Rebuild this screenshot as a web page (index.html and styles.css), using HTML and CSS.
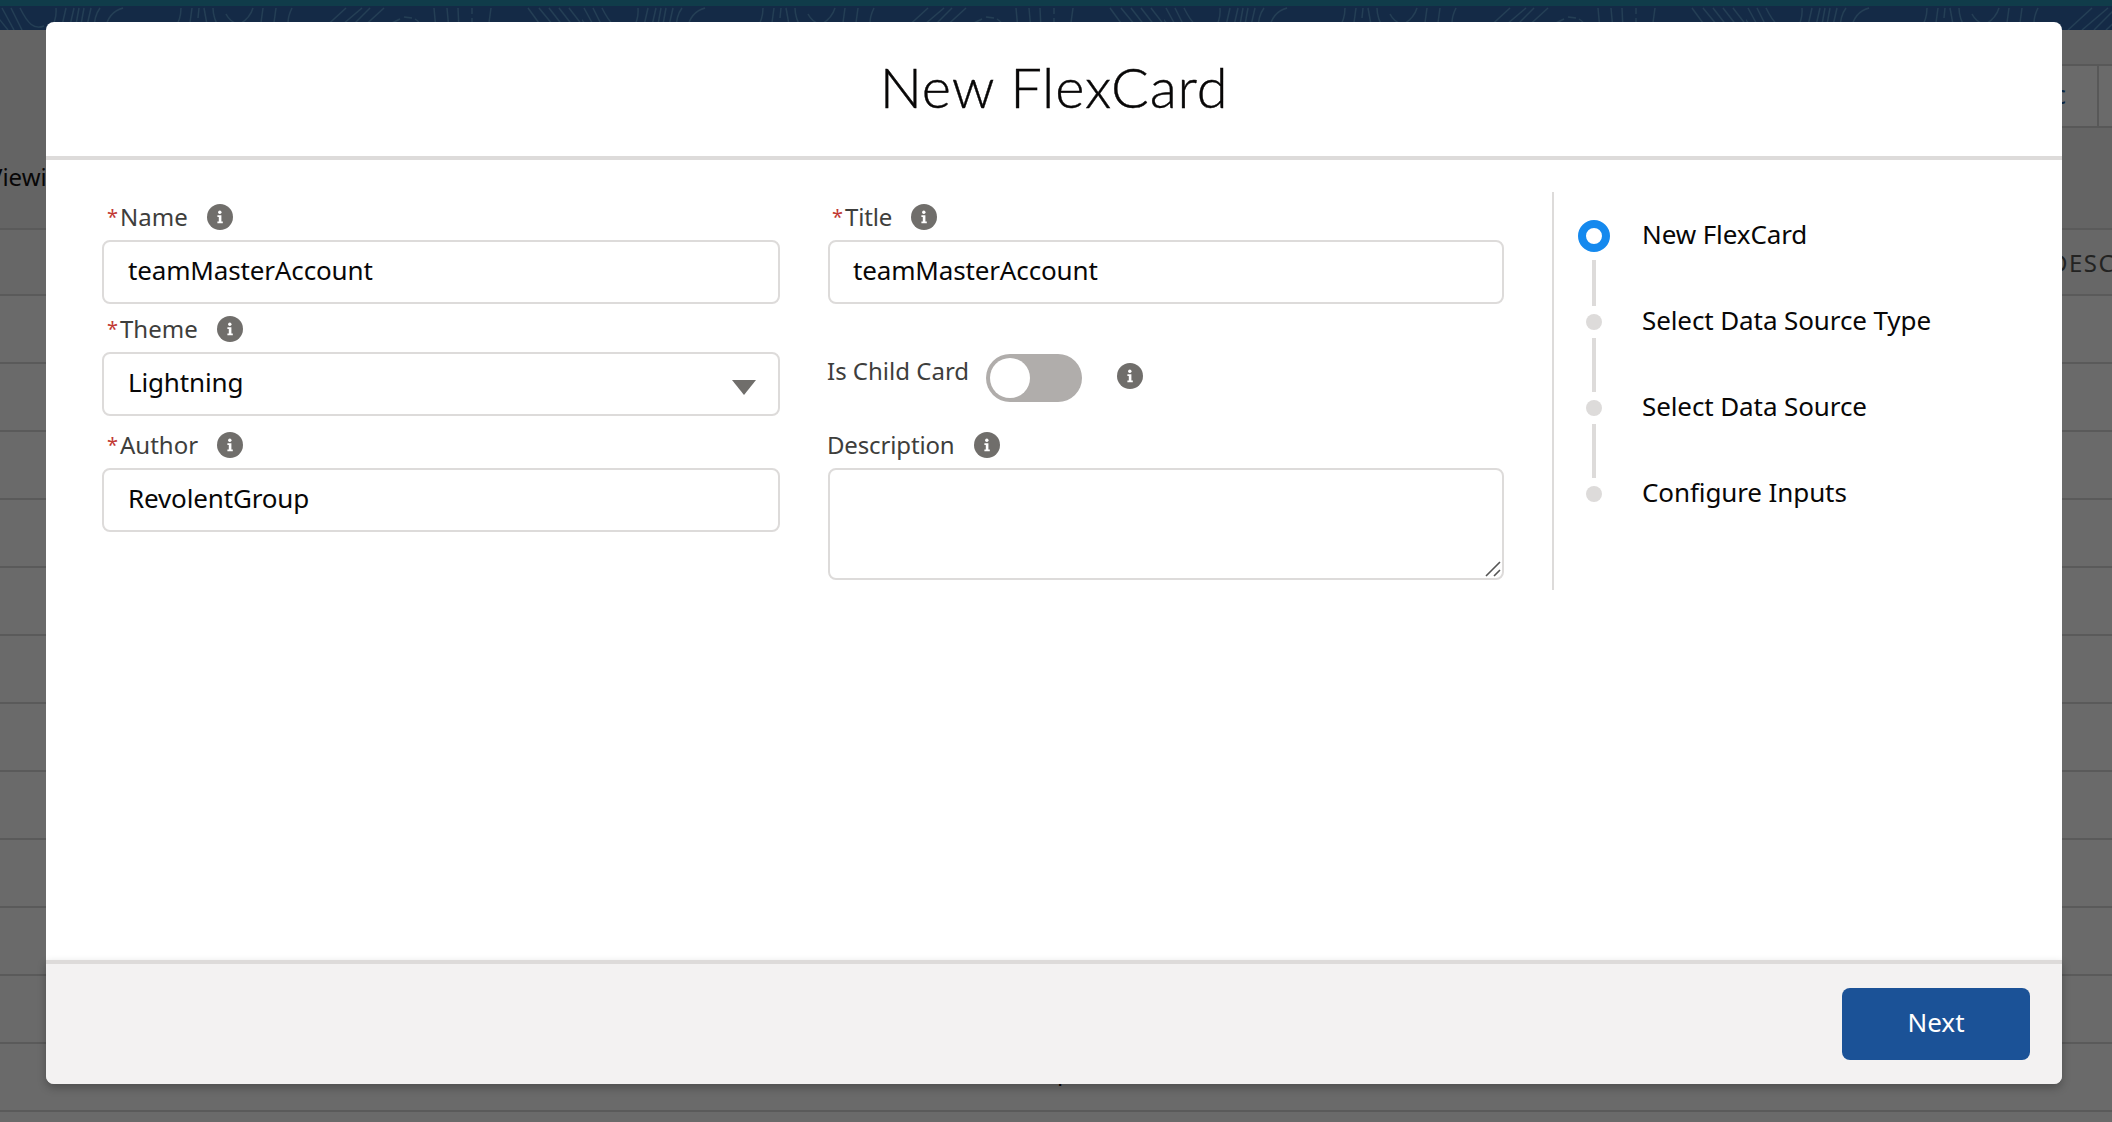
FILE: index.html
```html
<!DOCTYPE html>
<html lang="en">
<head>
<meta charset="utf-8">
<title>New FlexCard</title>
<link rel="stylesheet" href="styles.css">
</head>
<body>
<svg class="defs" aria-hidden="true">
  <symbol id="info" viewBox="0 0 26 26">
    <circle cx="13" cy="13" r="13" fill="#706e6b"/>
    <circle cx="12.8" cy="8.3" r="1.7" fill="#fff"/>
    <path d="M10.4 11.2h4v6.2h1.4v1.9h-5.4v-1.9h1.4v-4.3h-1.4z" fill="#fff"/>
  </symbol>
</svg>
<div class="page">
  <div class="topbar"></div>
  <svg class="band" width="2112" height="24">
    <defs>
      <pattern id="waves" width="582" height="24" patternUnits="userSpaceOnUse">
        <g fill="none" stroke="#243f55" stroke-width="1.4">
          <path d="M-8 4L8 24M2 2L14 24M11 2L22 24M20 2C28 18 34 24 44 20M56 2Q57 14 50 24M66 2L61 24M74 2L69 24M79 2L75 24M84 2L80 24M91 2L86 24M100 2Q94 10 94 24M123 2Q108 6 105 24M181 2Q181 14 174 24M192 2L189 24M199 2L198 12M204 2L208 24M213 2Q213 12 220 24M226 8Q230 16 238 18M253 2Q250 12 240 18M263 2L260 24M276 2L273 24M292 2Q286 14 289 24M346 2L322 24M362 2L336 24M370 2L348 24M384 2L360 24M392 17L400 13M404 11L412 12M415 13Q420 16 421 20M434 2L436 24M447 2L449 24M458 2L459 24M472 2V8M472 12V24M491 2L488 24M528 2L544 24M539 2L557 24M549 2L566 24M559 2L576 24M569 2L586 24"/>
        </g>
      </pattern>
    </defs>
    <rect width="2112" height="24" fill="#142a46"/>
    <rect width="2112" height="24" fill="url(#waves)"/>
  </svg>
  <div class="tools"><div class="tool">c</div><div class="tool"></div></div>
  <div class="viewing">Viewing</div>
  <div class="thead">DESCRIPTION</div>
  <div class="rows"></div>
  <div class="below">p</div>
</div>

<main class="modal">
  <header class="modal-header"><h1>New FlexCard</h1></header>
  <section class="modal-body">
    <form class="form">
      <div class="field">
        <div class="label"><b>*</b>Name<svg><use href="#info"/></svg></div>
        <div class="input">teamMasterAccount</div>
      </div>
      <div class="field second">
        <div class="label"><b>*</b>Title<svg><use href="#info"/></svg></div>
        <div class="input">teamMasterAccount</div>
      </div>
      <div class="field">
        <div class="label"><b>*</b>Theme<svg><use href="#info"/></svg></div>
        <div class="input select">Lightning<i class="caret"></i></div>
      </div>
      <div class="field child">
        <span>Is Child Card</span><div class="toggle"></div><svg><use href="#info"/></svg>
      </div>
      <div class="field">
        <div class="label"><b>*</b>Author<svg><use href="#info"/></svg></div>
        <div class="input">RevolentGroup</div>
      </div>
      <div class="field second">
        <div class="label plain">Description<svg><use href="#info"/></svg></div>
        <div class="input area"><svg class="grip" viewBox="0 0 18 18"><path d="M2 16L16 2M10 16L16 10"/></svg></div>
      </div>
    </form>
    <ol class="steps">
      <li class="active"><span class="text">New FlexCard</span></li>
      <li><span class="text">Select Data Source Type</span></li>
      <li><span class="text">Select Data Source</span></li>
      <li><span class="text">Configure Inputs</span></li>
    </ol>
  </section>
  <footer class="modal-footer"><button>Next</button></footer>
</main>
</body>
</html>
```
FILE: styles.css
```css
*, *::before, *::after { box-sizing: border-box; }
body {
  margin: 0;
  width: 2112px;
  height: 1122px;
  overflow: hidden;
  position: relative;
  background: #646464;
  font-family: "Noto Sans", "Open Sans", sans-serif;
  font-size: 26px;
  color: #080707;
}
.defs { position: absolute; width: 0; height: 0; }

/* Dimmed page behind the dialog */
.page { height: 1122px; position: relative; overflow: hidden; }
.topbar { height: 6px; background: #103c4a; }
.band { display: block; }
.tools {
  position: absolute; left: 1980px; top: 64px; width: 140px; height: 64px;
  display: flex; border: 2px solid #585858; background: #6a6a6a;
}
.tool { width: 117px; flex: none; border-right: 2px solid #585858; padding-right: 31px; text-align: right; line-height: 56px; color: #0b2440; }
.viewing { position: absolute; left: -12px; top: 160px; line-height: 34px; font-size: 24px; }
.thead {
  position: absolute; left: 0; top: 228px; width: 2112px; height: 68px;
  border-top: 2px solid #5a5a5a; border-bottom: 2px solid #5a5a5a;
  background: #676767; padding-left: 2050px; line-height: 66px;
  font-size: 24px; letter-spacing: 1.5px; color: #232322;
}
.rows {
  position: absolute; left: 0; top: 296px; width: 2112px; height: 826px;
  background: repeating-linear-gradient(#6a6a6a 0 66px, #5a5a5a 66px 68px);
}
.below { position: absolute; left: 1057px; top: 1055px; line-height: 32px; font-size: 24px; }

/* Dialog */
.modal {
  position: absolute; left: 46px; top: 22px; width: 2016px; height: 1062px;
  display: flex; flex-direction: column;
  border-radius: 8px; background: #fff;
}
.modal-header {
  height: 138px; border-bottom: 4px solid #dddbda;
  display: flex; justify-content: center;
}
h1 { margin: 0; font: 300 56px/130px "Lato", sans-serif; letter-spacing: .8px; -webkit-text-stroke: .4px #080707; }
.modal-body { flex: 1; display: flex; padding: 32px 56px 0; }
.form {
  width: 1402px; flex: none;
  display: grid; grid-template-columns: 678px 676px; column-gap: 48px;
  grid-template-rows: 112px 116px 128px; align-content: start;
}
.label { height: 48px; padding: 1px 0 0 5px; display: flex; align-items: center; font-size: 24px; color: #3e3e3c; }
.second .label { padding-left: 4px; letter-spacing: -.15px; }
.label.plain.plain { padding-left: 0; margin-left: -1px; }
.label b { width: 13px; font-size: 20px; font-weight: 400; color: #c23934; }
.label svg { width: 26px; height: 26px; margin: 1px 0 0 19px; }
.input {
  position: relative; height: 64px; border: 2px solid #dddbda; border-radius: 8px;
  padding: 0 24px; line-height: 56px; letter-spacing: -.15px;
}
.second .input { padding-left: 23px; }
.caret {
  position: absolute; right: 22px; top: 26px;
  border: 12px solid transparent; border-top: 15px solid #706e6b; border-bottom: 0;
}
.area { height: 112px; }
.grip { position: absolute; right: 0; bottom: 0; width: 18px; height: 18px; fill: none; stroke: #555; stroke-width: 1.6; }
.child { display: flex; align-items: flex-start; font-size: 24px; color: #3e3e3c; }
.child span { line-height: 34px; margin: 50px 0 0 -1px; width: 159px; white-space: nowrap; }
.toggle { width: 96px; height: 48px; border-radius: 24px; background: #b0adab; margin-top: 50px; padding: 4px; }
.toggle::before { content: ""; display: block; width: 40px; height: 40px; border-radius: 50%; background: #fff; }
.child svg { width: 26px; height: 26px; margin: 59px 0 0 35px; }
.steps {
  list-style: none; margin: 0 0 0 48px; padding: 28px 0 0 24px;
  height: 398px; width: 440px; border-left: 2px solid #dddbda;
}
.steps li { position: relative; height: 86px; padding-left: 64px; line-height: 28px; letter-spacing: -.1px; }
.steps li::before {
  content: ""; position: absolute; left: 8px; top: 8px; width: 16px; height: 16px;
  border-radius: 50%; background: #dddbda;
}
.steps .active::before { left: 0; top: 0; width: 32px; height: 32px; background: #fff; border: 8px solid #1589ee; }
.steps li:not(:last-child)::after {
  content: ""; position: absolute; left: 14px; top: 32px; width: 4px; height: 54px; background: #dddbda;
}
.steps .active:not(:last-child)::after { top: 40px; height: 46px; }
.modal-footer {
  height: 124px; border-top: 4px solid #dddbda; border-radius: 0 0 8px 8px;
  background: #f3f2f2; box-shadow: 0 4px 8px rgba(0,0,0,.25);
  display: flex; justify-content: flex-end; padding: 24px 32px;
}
button {
  width: 188px; height: 72px; border: 0; border-radius: 8px; padding: 0 0 5px;
  background: #1b5297; color: #fff; font: 26px "Noto Sans", sans-serif;
}
```
